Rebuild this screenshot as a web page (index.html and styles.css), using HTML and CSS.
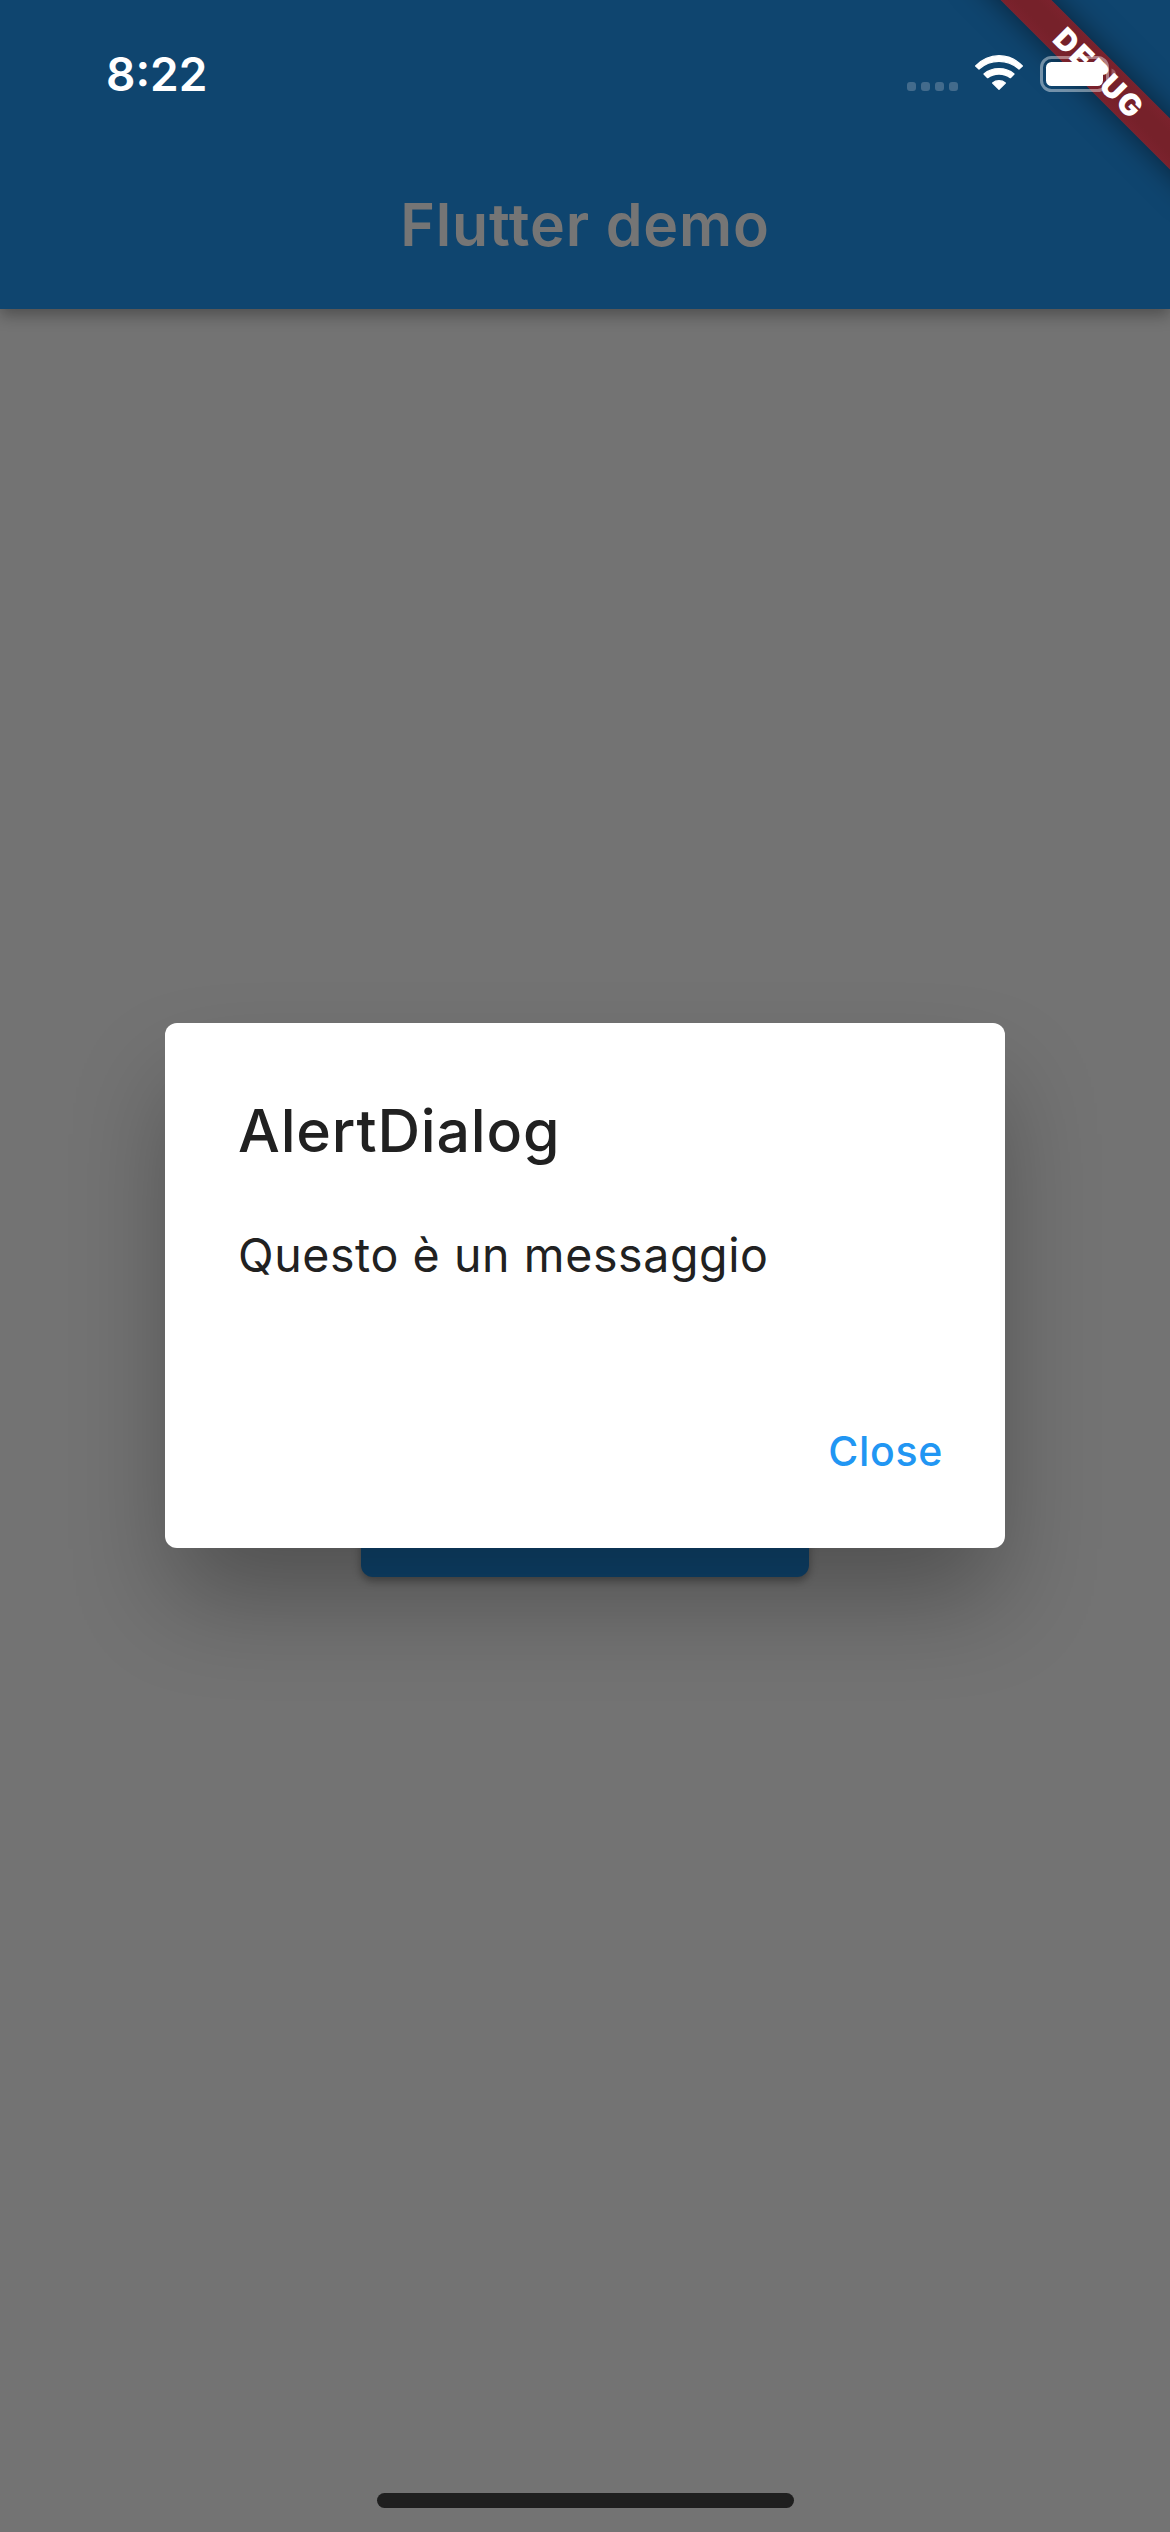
FILE: index.html
```html
<!DOCTYPE html>
<html lang="it">
<head>
<meta charset="utf-8">
<title>Flutter demo</title>
<link rel="stylesheet" href="styles.css">
</head>
<body>
<div class="screen">
  <header class="app-bar">
    <div class="status-bar">
      <span class="time">8:22</span>
      <div class="status-icons">
        <div class="signal"><i class="dot"></i><i class="dot"></i><i class="dot"></i><i class="dot"></i></div>
        <svg class="wifi" viewBox="0 0 150 114" aria-hidden="true">
          <g fill="#fff" stroke="#fff" stroke-width="4" stroke-linejoin="round">
            <path d="M5 36Q35 5 75 5Q115 5 145 36L135 45Q109 22 75 22Q41 22 15 45Z"/>
            <path d="M30 60Q48 44 75 44Q102 44 120 60L109 71Q95 60 75 60Q55 60 41 71Z"/>
            <path d="M56 87Q64 80 75 80Q86 80 94 87L75 106Z"/>
          </g>
        </svg>
        <svg class="battery" viewBox="0 0 78 36" aria-hidden="true">
          <rect x="1.5" y="1.5" width="66" height="33" rx="10" fill="none" stroke="#fff" stroke-opacity=".42" stroke-width="3"/>
          <path d="M71.500 12.500Q76 14 76 18Q76 22 71.500 23.500Z" fill="#fff" fill-opacity=".25"/>
          <rect x="6" y="6" width="57" height="24" rx="5.500" fill="#fff"/>
        </svg>
      </div>
    </div>
    <h1 class="title">Flutter demo</h1>
  </header>
  <main class="content">
    <div class="raised-button"></div>
  </main>
  <div class="home-indicator"></div>
  <div class="overlay">
    <section class="dialog" role="alertdialog">
      <h2 class="dialog-title">AlertDialog</h2>
      <p class="dialog-text">Questo è un messaggio</p>
      <div class="actions"><button class="text-button">Close</button></div>
    </section>
  </div>
  <div class="banner"><span class="banner-text">DEBUG</span></div>
</div>
</body>
</html>
```
FILE: styles.css
```css
* { box-sizing: border-box; }
body { margin: 0; }
h1, h2, p { margin: 0; }

.screen {
  position: relative;
  display: flex;
  flex-direction: column;
  width: 1170px;
  height: 2532px;
  overflow: hidden;
  background: #737373;
  font-family: Inter, "Liberation Sans", sans-serif;
}

.app-bar {
  height: 309px;
  background: #0f456f;
  box-shadow: 0 6px 15px rgba(0, 0, 0, .32);
}
.status-bar {
  position: relative;
  z-index: 3;
  display: flex;
  justify-content: space-between;
  height: 141px;
  padding: 46px 52px 0 106px;
}
.time {
  color: #fff;
  font-size: 46px;
  font-weight: 600;
  line-height: 56px;
}
.status-icons { display: flex; align-items: flex-start; }
.signal { display: flex; gap: 5px; padding-top: 36px; }
.dot {
  width: 9px;
  height: 9px;
  border-radius: 3px;
  background: #436b8c;
}
.wifi { width: 50px; height: 38px; margin: 8px 0 0 16px; }
.battery { width: 78px; height: 36px; margin: 10px 0 0 16px; }

.title {
  color: #757575;
  font-size: 59px;
  font-weight: 600;
  letter-spacing: .84px;
  line-height: 168px;
  text-align: center;
}

.content {
  display: flex;
  flex: 1;
  flex-direction: column;
  align-items: center;
  padding-top: 1124px;
}
.raised-button {
  width: 448px;
  height: 144px;
  border-radius: 12px;
  background: #0f456f;
  box-shadow: 0 4px 8px rgba(0, 0, 0, .35);
}
.home-indicator {
  width: 417px;
  height: 15px;
  margin: 0 auto 24px;
  border-radius: 8px;
  background: #1f1f1f;
}

.overlay {
  position: absolute;
  inset: 0;
  z-index: 1;
  display: flex;
  justify-content: center;
  align-items: flex-start;
  padding-top: 1023px;
}
.dialog {
  width: 840px;
  height: 525px;
  padding: 72px 62px 0 73px;
  border-radius: 12px;
  background: #fff;
  color: #212121;
  box-shadow: 0 56px 100px -8px rgba(0, 0, 0, .3);
}
.dialog-title {
  font-size: 59px;
  font-weight: 500;
  letter-spacing: .82px;
  line-height: 72px;
}
.dialog-text {
  margin-top: 60px;
  font-size: 46.5px;
  letter-spacing: .6px;
  line-height: 56px;
}
.actions { display: flex; justify-content: flex-end; margin-top: 144px; }
.text-button {
  padding: 0;
  border: 0;
  background: none;
  color: #2196f3;
  font: 500 41px/48px Inter, "Liberation Sans", sans-serif;
  letter-spacing: .7px;
}

/* corner ribbon, centred 102px from the corner along the diagonal */
.banner {
  position: absolute;
  z-index: 2;
  top: 54px;
  left: 938px;
  display: flex;
  justify-content: center;
  align-items: center;
  width: 320px;
  height: 36px;
  background: linear-gradient(#7b222d, #76212a 30%, #76212a 70%, #7b222d);
  box-shadow: 0 0 30px rgba(0, 0, 0, .5);
  transform: rotate(45deg);
}
.banner-text {
  margin-right: -3.5px;
  color: #fff;
  font-size: 30px;
  font-weight: 900;
  letter-spacing: 1.9px;
  line-height: 36px;
}
```
